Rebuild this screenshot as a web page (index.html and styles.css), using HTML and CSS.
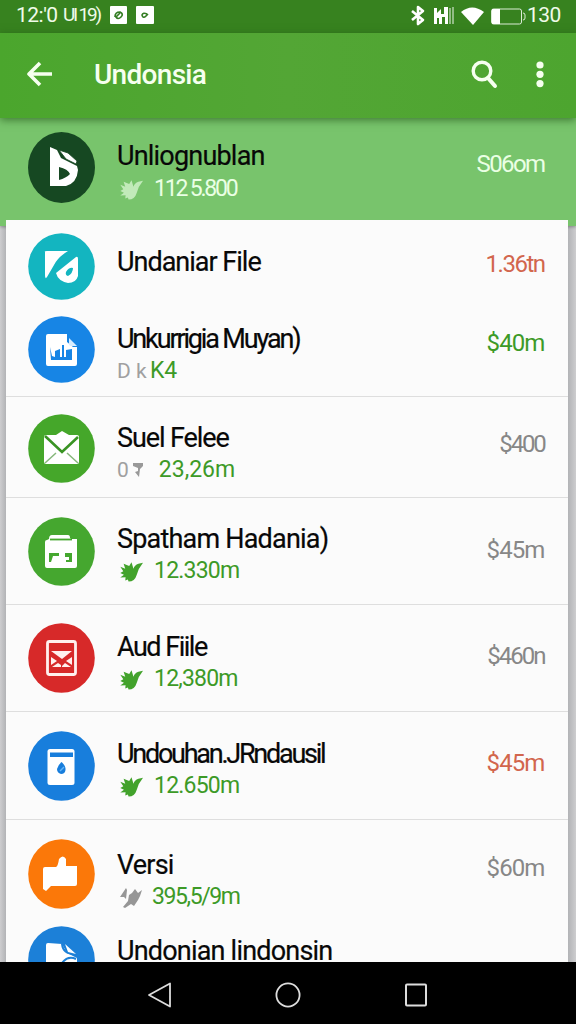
FILE: index.html
```html
<!DOCTYPE html>
<html lang="id">
<head>
<meta charset="utf-8">
<title>Undonsia</title>
<link rel="stylesheet" href="styles.css">
</head>
<body>
<svg class="defs" aria-hidden="true">
  <symbol id="leaf" viewBox="0 0 76 66"><path d="M73 5L59 8Q47 12 44 23L38 3L31 15L14 8L19 23L4 17L13 31L4 36L15 41L4 50L20 49L19 59L27 56L29 62Q48 62 54 41Q59 22 73 5Z" fill="currentColor"/></symbol>
</svg>
<div class="phone">
  <header class="status">
    <span class="clock">12:'0</span><span class="carrier">UI 19)</span>
    <svg class="notices" viewBox="0 0 46 20"><rect x="1" y="1" width="17" height="18" rx="1" fill="#fff"/><rect x="27" y="1" width="18" height="18" rx="1" fill="#fff"/><path d="M6 12q0-5 5-5q4 2 1 5q-3 3-5 0l4-4" stroke="#347d23" stroke-width="1.7" fill="none"/><path d="M38 9q-4-2-5 1q1 4 4 1l2-2" stroke="#347d23" stroke-width="1.6" fill="none"/></svg>
    <svg class="tray" viewBox="0 0 116 24">
      <path d="M2 8L13 17L8 21V4L13 8L2 17" fill="none" stroke="#fff" stroke-width="2.600" stroke-linejoin="round"/>
      <path d="M24 5h3v5l4-4v5h3V4h4v17h-3v-7h-3v7h-3v-6h-2v6h-3z" fill="#fff"/><path d="M40 5v16M43 4v17" stroke="#a9cb9f" stroke-width="1.6"/>
      <path d="M51 9Q62 0 74 9L63 22Z" fill="#fff"/>
      <rect x="81.500" y="6" width="30" height="15" rx="2" fill="none" stroke="#dcecd7" stroke-width="1"/><path d="M82 6h8v15h-8z" fill="#fff"/><path d="M113 10q2 0 2 2v3q0 2-2 2" stroke="#dcecd7" fill="none"/>
    </svg>
    <span class="battery">130</span>
  </header>
  <nav class="appbar">
    <svg class="back" viewBox="0 0 26 28"><path d="M13 3L2 14L13 25M2 14H25" fill="none" stroke="#f6ffef" stroke-width="3.600" stroke-linejoin="round"/></svg>
    <h1>Undonsia</h1>
    <svg class="search" viewBox="0 0 28 30"><circle cx="11" cy="11" r="8.800" fill="none" stroke="#f6ffef" stroke-width="3.400"/><path d="M17 18L24 26" stroke="#f6ffef" stroke-width="4" stroke-linecap="round"/></svg>
    <svg class="more" viewBox="0 0 8 28"><circle cx="4" cy="4" r="3.600" fill="#f6ffef"/><circle cx="4" cy="13.300" r="3.600" fill="#f6ffef"/><circle cx="4" cy="22.600" r="3.600" fill="#f6ffef"/></svg>
  </nav>
  <section class="row featured">
    <svg class="avatar" viewBox="0 0 67 71" preserveAspectRatio="none"><ellipse cx="33.500" cy="35.500" rx="33.500" ry="35.500" fill="#164822"/><path fill="#fff" fill-rule="evenodd" d="M22 15L29 18L33 26L49 34L50 38Q49 51 38 54H22ZM31 35V48Q38 46 42 42Q40 37 31 35Z"/><path d="M31 18L40 21L49 29L48 32L38 27Z" fill="#fff" stroke="#164822" stroke-width="0.800"/></svg>
    <div class="info"><div class="title t0">Unliognublan</div><div class="sub s0"><svg class="leaf"><use href="#leaf"/></svg><span>112 5.800</span></div></div>
    <div class="amount a0">S06om</div>
  </section>
  <main class="card">
    <section class="row r1">
      <svg class="avatar" viewBox="0 0 67 67"><circle cx="33.500" cy="33.500" r="33.300" fill="#13b5c0"/><path d="M17 19Q16 18 19 18H40Q30 24 26 32L19 44Q17 47 17 42Z" fill="#fff"/><path fill="#fff" fill-rule="evenodd" d="M48 24Q50 23 50 26V43Q48 50 40 50Q30 48 28 40ZM38 39Q37 42 40 43Q45 40 45 35Q41 34 38 39Z"/></svg>
      <div class="info"><div class="title t1">Undaniar File</div></div>
      <div class="amount a1 red">1.36tn</div>
    </section>
    <section class="row r2">
      <svg class="avatar" viewBox="0 0 67 67"><circle cx="33.500" cy="33.500" r="33.300" fill="#1785e5"/><path fill="#fff" d="M20 18H39V26L45 31H49V48Q49 50 47 50H20Q18 50 18 48V20Q18 18 20 18Z"/><path d="M22 31L23 44H44V33L38 34V41H36V29H34V41H32V33L27 35V41L24 40Z" fill="#1785e5"/><path d="M41 22L49 30H43Q41 30 41 28Z" fill="#d8edff"/></svg>
      <div class="info"><div class="title t2">Unkurrigia Muyan)</div><div class="sub s2"><span class="gray pre">D k</span><span>K4</span></div></div>
      <div class="amount a2 green">$40m</div>
    </section>
    <section class="row r3">
      <svg class="avatar" viewBox="0 0 67 69" preserveAspectRatio="none"><ellipse cx="33.500" cy="34.500" rx="33.300" ry="34.300" fill="#45a72a"/><path d="M18 21H28L34 17L41 21H49Q51 21 51 23V48Q51 50 49 50H18Q16 50 16 48V23Q16 21 18 21Z" fill="#fff"/><path d="M17 22L34 38L50 23" fill="none" stroke="#3a9424" stroke-width="2.600"/><path d="M17 49L28 39M50 49L39 39" stroke="#86b77b" stroke-width="1.500"/></svg>
      <div class="info"><div class="title t3">Suel Felee</div><div class="sub s3"><span class="gray pre">0</span><svg class="funnel" viewBox="0 0 12 16"><path d="M1 1h10v3l-3 3-1 8-4-5 3-1V6L1 4z" fill="#999"/></svg><span>23,26m</span></div></div>
      <div class="amount a3">$400</div>
    </section>
    <section class="row r4">
      <svg class="avatar" viewBox="0 0 67 69" preserveAspectRatio="none"><ellipse cx="33.500" cy="34.500" rx="33.300" ry="34.300" fill="#45a72f"/><path d="M21 22Q21 18 24 18H40Q42 18 42 21L43 22H49V49Q49 51 47 51H19Q17 51 17 49V25Q17 23 19 23Z" fill="#fff"/><path d="M22 22.500H44" stroke="#45a72f" stroke-width="1.800"/><path d="M21 36H31V39H25L23 45H21ZM37 36H44V45H38V43H41V40H37Z" fill="#45a72f"/></svg>
      <div class="info"><div class="title t4">Spatham Hadania)</div><div class="sub s4"><svg class="leaf"><use href="#leaf"/></svg><span>12.330m</span></div></div>
      <div class="amount a4">$45m</div>
    </section>
    <section class="row r5">
      <svg class="avatar" viewBox="0 0 67 70" preserveAspectRatio="none"><ellipse cx="33.500" cy="35" rx="33.300" ry="34.800" fill="#d72929"/><rect x="19.500" y="18.500" width="28" height="33" rx="2" fill="none" stroke="#fff0ee" stroke-width="2.800"/><path d="M23 28H44L34 36ZM23 34L29 38L23 42ZM44 34L38 38L44 42ZM24 44L30 40L33 42V44ZM43 44L37 40L34 43V44Z" fill="#fff0ee"/></svg>
      <div class="info"><div class="title t5">Aud Fiile</div><div class="sub s5"><svg class="leaf"><use href="#leaf"/></svg><span>12,380m</span></div></div>
      <div class="amount a5">$460n</div>
    </section>
    <section class="row r6">
      <svg class="avatar" viewBox="0 0 67 70" preserveAspectRatio="none"><ellipse cx="33.500" cy="35" rx="33.300" ry="34.800" fill="#187edc"/><rect x="19.500" y="18" width="27" height="36" rx="2.500" fill="#fff"/><path d="M22 21.500H45V26H22Z" fill="#187edc"/><path d="M33.500 31Q38 35 37.500 39Q37 43 33 43Q29 42 29 38Q30 34 33.500 31Z" fill="#187edc"/><path d="M32 40L36 36" stroke="#62b5fa" stroke-width="1.500"/></svg>
      <div class="info"><div class="title t6">Undouhan.JRndausil</div><div class="sub s6"><svg class="leaf"><use href="#leaf"/></svg><span>12.650m</span></div></div>
      <div class="amount a6 red">$45m</div>
    </section>
    <section class="row r7">
      <svg class="avatar" viewBox="0 0 67 70" preserveAspectRatio="none"><ellipse cx="33.500" cy="35" rx="33.300" ry="34.800" fill="#fb7809"/><path d="M17 28H28Q30 27 31 20Q35 15 38 20V27H49V45Q49 47 47 47H23L18 52L15 50V30Q15 28 17 28Z" fill="#fff"/></svg>
      <div class="info"><div class="title t7">Versi</div><div class="sub s7"><svg class="bolt" viewBox="0 0 24 22"><path d="M7 1L1 10H5L7 12L8 3ZM16 2L13 6L10 8L9 14L4 20L6 21L12 17L15 19L19 13L21 9L23 3L19 6Z" fill="#969696"/></svg><span>395,5/9m</span></div></div>
      <div class="amount a7">$60m</div>
    </section>
    <section class="row r8">
      <svg class="avatar" viewBox="0 0 67 67"><circle cx="33.500" cy="33.500" r="33.300" fill="#1c80d8"/><path d="M18 19Q18 17 20 17L34 18L39 27L49 32V50H18Z" fill="#fff"/><path d="M34 18Q35 29 49 28M34 37Q40 29 48 33" fill="none" stroke="#1c80d8" stroke-width="2"/><path d="M37 18L48 28L40 26Z" fill="#fff"/></svg>
      <div class="info"><div class="title t8">Undonian lindonsin</div></div>
    </section>
  </main>
  <footer class="nav">
    <svg viewBox="0 0 28 28"><path d="M24 2.500V25.500L3 14Z" fill="none" stroke="#ddd" stroke-width="1.800" stroke-linejoin="round"/></svg>
    <svg viewBox="0 0 28 28"><circle cx="14" cy="14" r="11.600" fill="none" stroke="#ddd" stroke-width="1.800"/></svg>
    <svg viewBox="0 0 28 28"><rect x="4" y="3.500" width="20" height="21" rx="1" fill="none" stroke="#ddd" stroke-width="2"/></svg>
  </footer>
</div>
</body>
</html>
```
FILE: styles.css
```css
* { box-sizing: border-box; }
body { margin: 0; font-family: Roboto, "Liberation Sans", sans-serif; }
svg { display: block; flex: none; }
.defs { position: absolute; width: 0; height: 0; }
.phone { width: 576px; height: 1024px; display: flex; flex-direction: column; overflow: hidden; background: linear-gradient(90deg, #cdcdcf, #b2b3b6 6px, #b2b3b6 568px, #cdcdcf 576px); }
.status { height: 33px; flex: none; display: flex; align-items: center; padding: 0 14px 4px 16px; background: #37821f; color: #effbe9; font-size: 21px; white-space: nowrap; }
.clock { width: 47px; letter-spacing: -0.5px; }
.carrier { width: 46px; font-size: 19px; letter-spacing: -2.2px; }
.notices { width: 46px; height: 20px; }
.tray { width: 116px; height: 24px; margin-left: auto; }
.battery { width: 35px; margin-left: 1px; letter-spacing: -0.5px; }
.appbar { height: 85px; flex: none; display: flex; align-items: center; padding: 0 32px 4px 27px; background: linear-gradient(90deg, #4ba62d, #53a635 50%, #4da52f); box-shadow: 0 2px 8px rgba(30, 80, 20, .65); z-index: 1; }
.back { width: 26px; height: 28px; }
h1 { flex: 1; margin: 3px 0 0 41px; font-size: 28px; line-height: 34px; font-weight: 500; color: #f6ffef; letter-spacing: -0.7px; }
.search { width: 28px; height: 30px; margin: 2px 37px 0 0; }
.more { width: 8px; height: 28px; margin-top: 3px; }
.row { display: flex; align-items: flex-start; padding-right: 24px; flex: none; }
.featured { height: 108px; padding: 14px 32px 0 28px; background: #78c46c; box-shadow: 0 1px 3px rgba(0, 0, 0, .3); }
.card { flex: 1; min-height: 0; margin: -6px 8px 0 6px; overflow: hidden; background: #fbfbfb; z-index: 1; }
.card .row { padding-left: 22px; }
.avatar { width: 67px; height: 70px; }
.featured .avatar { height: 71px; }
.r1 .avatar, .r2 .avatar, .r8 .avatar { height: 67px; }
.r3 .avatar, .r4 .avatar { height: 69px; }
.info { flex: 1; margin-left: 22px; white-space: nowrap; }
.title { height: 32px; font-size: 27px; line-height: 32px; color: #080808; letter-spacing: -0.8px; -webkit-text-stroke: 0.2px; }
.sub { height: 32px; display: flex; align-items: flex-start; font-size: 23px; line-height: 32px; color: #3d9a27; letter-spacing: -0.8px; }
.leaf { width: 25px; height: 22px; margin: 6px 10px 0 2px; color: #42a22b; }
.bolt { width: 24px; height: 22px; margin: 6px 9px 0 2px; }
.funnel { width: 12px; height: 16px; margin: 8px 15px 0 3px; }
.gray { color: #a0a0a0; }
.pre { font-size: 21px; }
.amount { font-size: 24px; line-height: 32px; color: #878787; letter-spacing: -0.9px; margin-right: -0.5px; white-space: nowrap; }
.featured .sub, .featured .amount { color: #eaffe4; }
.featured .leaf { color: #c1eab9; }
.card .red { color: #d2664d; }
.card .green { color: #3d9a27; }

/* Tracking per label */
.t1 { letter-spacing: -1px; }
.t2 { letter-spacing: -2.150px; }
.t3 { letter-spacing: -1.100px; }
.t5 { letter-spacing: -1.500px; }
.t6 { letter-spacing: -2.250px; }
.s0 { letter-spacing: -2.200px; }
.s2 .pre { width: 33px; letter-spacing: 0; }
.s2 { letter-spacing: -0.3px; }
.s3 { letter-spacing: 0; }
.s7 { letter-spacing: -1.400px; }
.a0 { letter-spacing: -1.600px; }
.a1 { letter-spacing: -1.500px; }
.a3 { letter-spacing: -2.200px; }
.a5 { letter-spacing: -2px; }

.r1 { height: 90px; padding-top: 13px; }
.r2 { height: 87px; padding-top: 6px; border-bottom: 1px solid #dedede; }
.r3 { height: 101px; padding-top: 17px; border-bottom: 1px solid #dedede; }
.r4 { height: 107px; padding-top: 19px; border-bottom: 1px solid #dedede; }
.r5 { height: 107px; padding-top: 18px; border-bottom: 1px solid #dedede; }
.r6 { height: 108px; padding-top: 19px; border-bottom: 1px solid #dedede; }
.r7 { height: 106px; padding-top: 19px; }
.featured .info { margin-top: 8px; }
.featured .sub { padding-top: 1px; }
.featured .amount { margin-top: 16px; }
.r1 .info { margin-top: 13px; }
.r1 .amount { margin-top: 15px; }
.r2 .info { margin-top: 7px; }
.r2 .amount { margin-top: 11px; }
.r3 .info { margin-top: 8px; }
.r3 .amount { margin-top: 14px; }
.r4 .info { margin-top: 6px; }
.r4 .amount { margin-top: 17px; }
.r5 .info { margin-top: 8px; }
.r5 .amount { margin-top: 17px; }
.r6 .info { margin-top: 7px; }
.r6 .amount { margin-top: 16px; }
.r7 .info { margin-top: 10px; }
.r7 .amount { margin-top: 13px; }
.r8 .info { margin-top: 9px; }
.nav { height: 62px; flex: none; display: flex; justify-content: center; align-items: center; gap: 100px; padding: 4px 0 0 0; background: #000; z-index: 2; }
.nav svg { width: 28px; height: 28px; }
```
